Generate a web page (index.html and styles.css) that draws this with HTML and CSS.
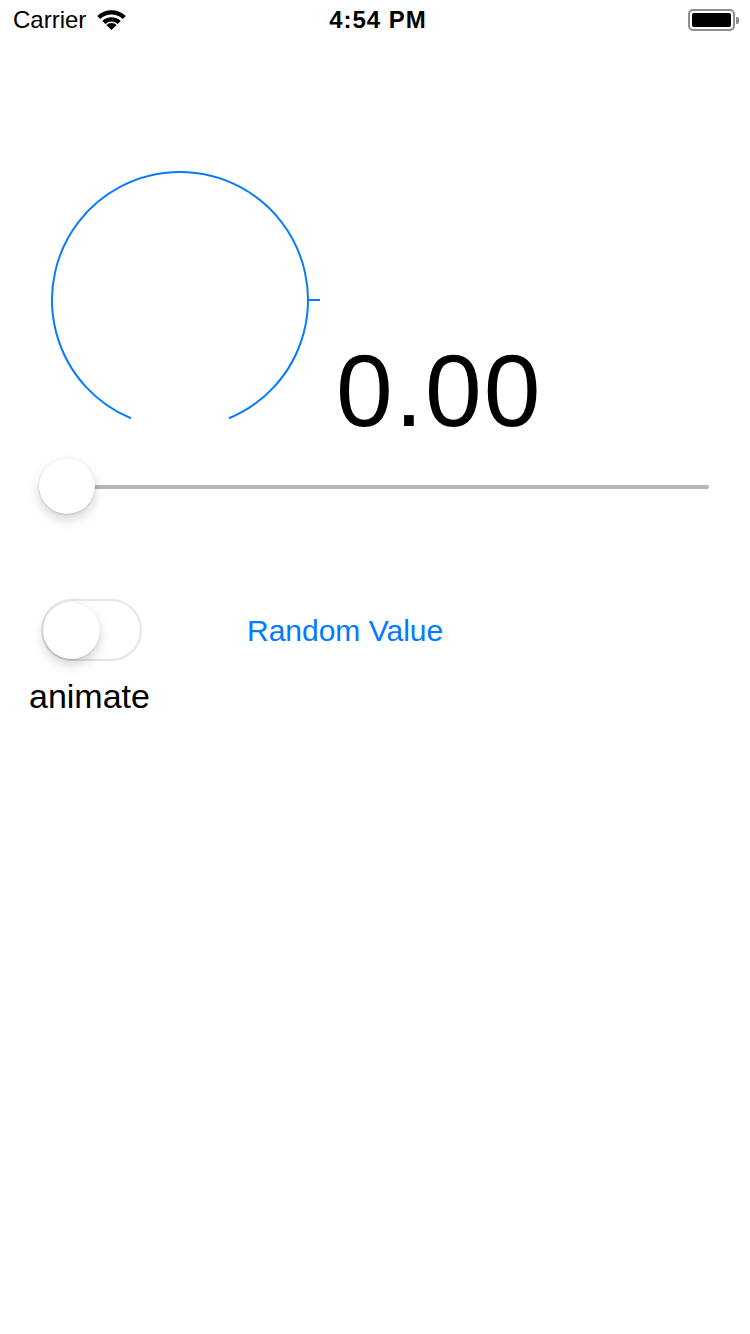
FILE: index.html
```html
<!DOCTYPE html>
<html>
<head>
<meta charset="utf-8">
<link rel="stylesheet" href="styles.css">
</head>
<body>
<div class="status-bar">
  <div class="sb-left">
    <span class="carrier">Carrier</span>
    <svg class="wifi" width="29" height="20" viewBox="3 5 24 17" preserveAspectRatio="none">
      <path d="M15 22 L10.76 17.76 A6 6 0 0 1 19.24 17.76 Z" fill="#000"/>
      <path d="M8.64 15.64 A9 9 0 0 1 21.36 15.64" fill="none" stroke="#000" stroke-width="3.6"/>
      <path d="M4.39 11.39 A15 15 0 0 1 25.61 11.39" fill="none" stroke="#000" stroke-width="3.6"/>
    </svg>
  </div>
  <div class="time">4:54 PM</div>
  <div class="sb-right">
    <div class="battery"><div class="battery-fill"></div></div>
    <div class="battery-nub"></div>
  </div>
</div>

<div class="gauge-row">
  <svg class="gauge" width="272" height="252" viewBox="0 0 272 252">
    <path d="M81 248.26 A128 128 0 1 1 179 248.26" fill="none" stroke="#0b7bfe" stroke-width="2"/>
    <line x1="257" y1="130" x2="270" y2="130" stroke="#0b7bfe" stroke-width="2"/>
  </svg>
  <div class="value">0.00</div>
</div>

<div class="slider">
  <div class="slider-thumb"></div>
  <div class="slider-track"></div>
</div>

<div class="controls">
  <div class="toggle-col">
    <div class="switch"><div class="switch-knob"></div></div>
    <div class="toggle-label">animate</div>
  </div>
  <div class="random-btn">Random Value</div>
</div>
</body>
</html>
```

FILE: styles.css
```css
html, body {
  margin: 0;
  padding: 0;
  background: #fff;
}
body {
  width: 750px;
  height: 1334px;
  font-family: "Liberation Sans", Arial, sans-serif;
  color: #000;
  overflow: hidden;
}
.status-bar {
  height: 40px;
  display: grid;
  grid-template-columns: 1fr auto 1fr;
  align-items: center;
  padding: 0 13px;
}
.sb-left {
  display: flex;
  align-items: center;
  gap: 11px;
}
.carrier {
  font-size: 24px;
  line-height: 40px;
}
.wifi {
  display: block;
}
.time {
  font-size: 24px;
  font-weight: bold;
  letter-spacing: 1px;
  line-height: 40px;
  margin-left: 6px;
}
.sb-right {
  display: flex;
  justify-content: flex-end;
  align-items: center;
  margin-right: -2px;
}
.battery {
  width: 47px;
  height: 22px;
  box-sizing: border-box;
  border: 2px solid #8e8e8e;
  border-radius: 5px;
  padding: 2px;
}
.battery-fill {
  width: 100%;
  height: 100%;
  background: #000;
  border-radius: 2px;
}
.battery-nub {
  width: 3px;
  height: 7px;
  background: #8e8e8e;
  border-radius: 0 2px 2px 0;
  margin-left: 1px;
}
.gauge-row {
  display: flex;
  align-items: flex-start;
  margin-top: 130px;
  height: 275px;
}
.gauge {
  margin-left: 50px;
  display: block;
}
.value {
  font-size: 102px;
  line-height: 102px;
  letter-spacing: 2px;
  margin-top: 170px;
  margin-left: 14px;
}
.slider {
  display: flex;
  align-items: center;
  height: 56px;
  margin-top: 13px;
  padding-left: 39px;
  padding-right: 41px;
}
.slider-thumb {
  width: 56px;
  height: 56px;
  border-radius: 50%;
  background: #fff;
  box-shadow: 0 0 0 0.5px rgba(0,0,0,0.06), 0 6px 12px rgba(0,0,0,0.16), 0 1px 2px rgba(0,0,0,0.12);
  position: relative;
  z-index: 1;
  flex: none;
}
.slider-track {
  flex: 1;
  height: 4px;
  margin-left: -28px;
  margin-top: 2px;
  background: #b6b6b6;
  border-radius: 2px;
}
.controls {
  display: flex;
  align-items: flex-start;
  margin-top: 85px;
}
.toggle-col {
  display: flex;
  flex-direction: column;
  margin-left: 29px;
}
.switch {
  margin-left: 12px;
  width: 101px;
  height: 62px;
  box-sizing: border-box;
  border: 2px solid #e5e5e5;
  border-radius: 31px;
  display: flex;
  align-items: center;
}
.switch-knob {
  width: 57px;
  height: 57px;
  border-radius: 50%;
  background: #fff;
  box-shadow: 0 0 0 0.5px rgba(0,0,0,0.06), 0 6px 12px rgba(0,0,0,0.16), 0 1px 2px rgba(0,0,0,0.12);
}
.toggle-label {
  font-size: 34px;
  line-height: 40px;
  margin-top: 15px;
}
.random-btn {
  color: #007aff;
  font-size: 30px;
  line-height: 36px;
  margin-top: 14px;
  margin-left: 97px;
}
```
